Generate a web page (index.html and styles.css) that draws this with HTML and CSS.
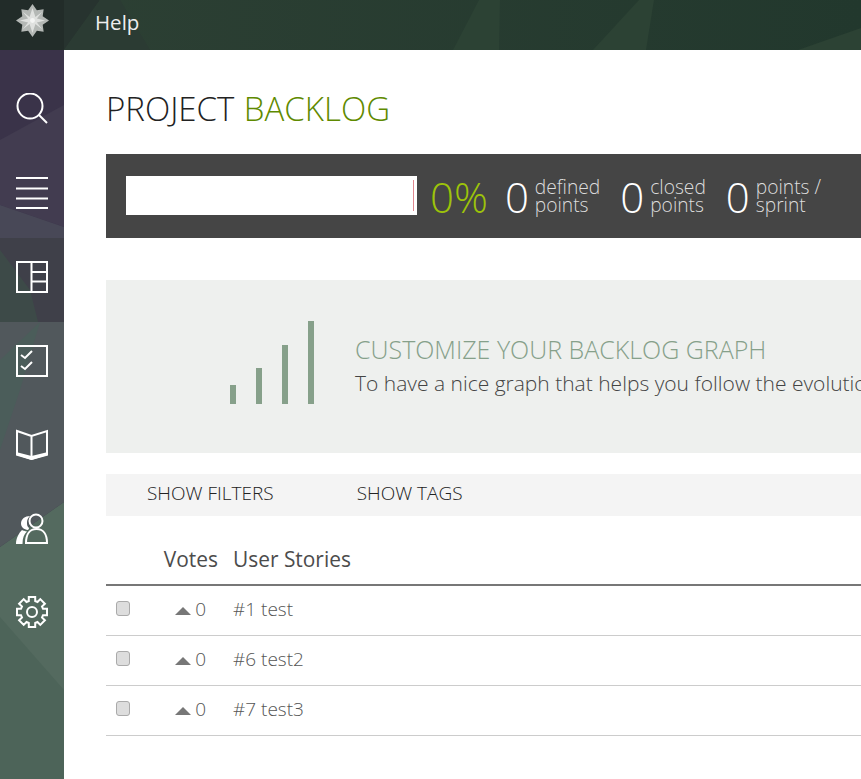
FILE: index.html
```html
<!DOCTYPE html>
<html lang="en">
<head>
  <meta charset="UTF-8" />
  <title>Project Backlog</title>
  <link rel="stylesheet" href="styles.css">
</head>
<body>
  <header class="topbar">
    <svg class="bg-shapes" width="861" height="50" viewBox="0 0 861 50">
      <polygon points="64,0 100,0 64,50" fill="#27332f" />
      <polygon points="100,0 120,0 150,50 64,50" fill="#2b3b33" />
      <polygon points="479,0 500,0 499,50 453,50" fill="#2c4234" />
      <polygon points="639,0 654,0 646,50 593,50" fill="#2c4234" />
      <polygon points="861,28 861,50 798,50" fill="#2c4234" />
    </svg>
    <a class="logo" href="#">
      <svg width="33" height="33" viewBox="0 0 34 34">
        <polygon points="17,0 21.5,6.5 28.5,5.5 27.5,12.5 34,17 27.5,21.5 28.5,28.5 21.5,27.5 17,34 12.5,27.5 5.5,28.5 6.5,21.5 0,17 6.5,12.5 5.5,5.5 12.5,6.5" fill="#b4b8b5" />
        <polygon points="17,4 20,13.5 27,8 21.5,15 30,17 21.5,19 27,26 20,20.5 17,30 14,20.5 7,26 12.5,19 4,17 12.5,15 7,8 14,13.5" fill="#dfe1df" />
        <circle cx="17" cy="17" r="2.5" fill="#f4f5f4" />
      </svg>
    </a>
    <nav class="topnav"><a href="#">Help</a></nav>
  </header>

  <div class="page">
    <aside class="sidebar">
      <svg class="bg-shapes" width="64" height="729" viewBox="0 0 64 729">
        <polygon points="0,90 64,55 64,177 0,155" fill="#423c50" />
        <polygon points="0,155 64,177 64,188 0,188" fill="#484857" />
        <polygon points="0,188 64,188 64,272 0,272" fill="#3f4049" />
        <polygon points="0,272 64,272 64,452 0,497" fill="#51585c" />
        <polygon points="0,497 64,452 64,729 0,729" fill="#546a5f" />
        <polygon points="0,567 64,640 64,729 0,729" fill="#4d6459" />
        <polygon points="40,272 20,340 0,400 0,310" fill="#4b5d5a" />
        <polygon points="0,200 30,240 38,272 0,272" fill="#3d4a48" />
      </svg>
      <a class="side-item" href="#">
        <svg width="32" height="32" viewBox="0 0 32 32"><circle cx="14" cy="13" r="12.5" /><line x1="23" y1="22" x2="31" y2="30" /></svg>
      </a>
      <a class="side-item" href="#">
        <svg width="32" height="32" viewBox="0 0 32 32"><path d="M0 1h32M0 11.500h32M0 21.500h32M0 31h32" /></svg>
      </a>
      <a class="side-item active" href="#">
        <svg width="32" height="32" viewBox="0 0 32 32"><rect x="1" y="1" width="30" height="30" /><path d="M15.500 1v30M15.500 11h15M15.500 20.500h15" /></svg>
      </a>
      <a class="side-item" href="#">
        <svg width="32" height="32" viewBox="0 0 32 32"><rect x="1" y="1" width="30" height="30" /><path d="M5 10l4 3 7-7M5 21l4 3 7-7" /></svg>
      </a>
      <a class="side-item" href="#">
        <svg width="32" height="32" viewBox="0 0 32 32">
          <path d="M15.500 7L1 2v23l14.500 5L31 25V2zM15.500 7v23" />
          <polygon class="solid" points="0,23 15.500,27 32,23 32,26.500 15.500,31 0,26.500" />
        </svg>
      </a>
      <a class="side-item" href="#">
        <svg width="32" height="32" viewBox="0 0 32 32">
          <circle cx="20" cy="8" r="6.500" />
          <path d="M10 30c0-9 4-14 10.500-14S31 21 31 30z" />
          <path class="solid" d="M14 3C9 3 5 6 5 10.500 5 14 8 16.500 12 17c1-1 1-2 1-2-2-1.500-2-3-2-6 0-2 1-4 3-6z" />
          <path class="solid" d="M6 17C3 20 0 25 0 31h6.500c0-6 1.500-10 4.500-12.500C9 18 7 17.500 6 17z" />
        </svg>
      </a>
      <a class="side-item side-gear" href="#">
        <svg width="32" height="32" viewBox="0 0 32 32">
          <circle cx="16" cy="16" r="5" />
          <polygon points="12.800,1 19.200,1 19.200,5 21.500,6 24.300,3.100 28.900,7.700 26,10.500 27,12.800 31,12.800 31,19.200 27,19.200 26,21.500 28.900,24.300 24.300,28.900 21.500,26 19.200,27 19.200,31 12.800,31 12.800,27 10.500,26 7.700,28.900 3.100,24.300 6,21.500 5,19.200 1,19.200 1,12.800 5,12.800 6,10.500 3.100,7.700 7.700,3.100 10.500,6 12.800,5" />
        </svg>
      </a>
    </aside>

    <main class="content">
      <h1 class="title">PROJECT <span>BACKLOG</span></h1>

      <section class="summary">
        <div class="progress"><span class="progress-mark"></span></div>
        <div class="percent">0%</div>
        <div class="stat"><b>0</b><span>defined<br>points</span></div>
        <div class="stat"><b>0</b><span>closed<br>points</span></div>
        <div class="stat"><b>0</b><span>points /<br>sprint</span></div>
      </section>

      <section class="graph-empty">
        <div class="bars">
          <i class="bar-1"></i><i class="bar-2"></i><i class="bar-3"></i><i class="bar-4"></i>
        </div>
        <div class="graph-text">
          <h2>CUSTOMIZE YOUR BACKLOG GRAPH</h2>
          <p>To have a nice graph that helps you follow the evolution of your project you have to set up your points</p>
        </div>
      </section>

      <div class="filters">
        <a href="#">SHOW FILTERS</a>
        <a href="#">SHOW TAGS</a>
      </div>

      <div class="table-head">
        <div class="col-votes">Votes</div>
        <div class="col-story">User Stories</div>
      </div>
      <div class="row">
        <input type="checkbox">
        <div class="col-votes"><i class="arrow"></i>0</div>
        <div class="col-story">#1 test</div>
      </div>
      <div class="row">
        <input type="checkbox">
        <div class="col-votes"><i class="arrow"></i>0</div>
        <div class="col-story">#6 test2</div>
      </div>
      <div class="row">
        <input type="checkbox">
        <div class="col-votes"><i class="arrow"></i>0</div>
        <div class="col-story">#7 test3</div>
      </div>
    </main>
  </div>
</body>
</html>
```

FILE: styles.css
```css
html, body {
  margin: 0;
  height: 100%;
  overflow: hidden;
}
body {
  font-family: 'Open Sans', sans-serif;
  color: #444;
  background: white;
}
a {
  color: inherit;
  text-decoration: none;
}
.bg-shapes {
  position: absolute;
  top: 0;
  left: 0;
}

/* top bar */
.topbar {
  position: relative;
  display: flex;
  height: 50px;
  background: linear-gradient(90deg, #2d4034, #22382d);
}
.logo {
  position: relative;
  width: 64px;
  background: #222c29;
  display: flex;
  justify-content: center;
  padding-top: 4px;
  box-sizing: border-box;
}
.topnav {
  position: relative;
  padding-left: 31px;
  line-height: 45px;
  font-size: 20.5px;
  color: #eee;
}

/* side menu */
.page {
  display: flex;
  height: 729px;
}
.sidebar {
  position: relative;
  flex: 0 0 64px;
  padding-top: 20px;
  box-sizing: border-box;
  background: #3a3349;
  overflow: hidden;
}
.side-item {
  position: relative;
  display: flex;
  justify-content: center;
  height: 84px;
  padding-top: 23px;
  box-sizing: border-box;
}
.side-gear {
  padding-top: 22px;
}
.side-item svg {
  fill: none;
  stroke: #fff;
  stroke-width: 2;
}
.side-item svg .solid {
  fill: #fff;
  stroke: none;
}

/* main */
.content {
  flex: 1;
  min-width: 0;
  padding: 0 0 0 42px;
  overflow: hidden;
}
.title {
  margin: 34px 0 0;
  font-size: 33px;
  word-spacing: 1px;
  line-height: 50px;
  height: 70px;
  font-weight: 300;
  color: #222;
}
.title span {
  color: #5f8a00;
}
.summary {
  display: flex;
  align-items: center;
  width: 860px;
  height: 84px;
  padding-left: 20px;
  box-sizing: border-box;
  background: #454545;
  color: #fff;
}
.progress {
  position: relative;
  width: 291px;
  height: 39px;
  margin-top: -1px;
  background: white;
}
.progress-mark {
  position: absolute;
  top: 4px;
  right: 3px;
  width: 1px;
  height: 31px;
  background: #e08890;
}
.percent {
  margin-left: 13px;
  margin-right: 17px;
  font-size: 42px;
  font-weight: 300;
  color: #9dc30a;
}
.stat {
  display: flex;
  align-items: center;
  margin-right: 20px;
  font-weight: 300;
}
.stat b {
  font-size: 42px;
  font-weight: 300;
  margin-right: 6px;
}
.stat span {
  font-size: 19.200px;
  line-height: 18px;
  color: #ddd;
}
.graph-empty {
  display: flex;
  align-items: flex-start;
  width: 860px;
  height: 173px;
  margin-top: 42px;
  background: #eef0ee;
  white-space: nowrap;
}
.bars {
  display: flex;
  align-items: flex-end;
  gap: 20px;
  height: 83px;
  margin: 41px 0 0 124px;
}
.bars i {
  width: 6px;
  background: #86a08a;
}
.bar-1 { height: 19px; }
.bar-2 { height: 36px; }
.bar-3 { height: 59px; }
.bar-4 { height: 83px; }
.graph-text {
  margin: 53px 0 0 41px;
}
.graph-text h2 {
  margin: 0;
  font-size: 25px;
  line-height: 33px;
  font-weight: 300;
  color: #86a08a;
}
.graph-text p {
  margin: 0;
  font-size: 21px;
  line-height: 35px;
  font-weight: 300;
  color: #444;
}
.filters {
  display: flex;
  gap: 83px;
  width: 860px;
  height: 42px;
  margin-top: 21px;
  padding-left: 41px;
  box-sizing: border-box;
  background: #f4f4f4;
  font-size: 19px;
  font-weight: 300;
  line-height: 38px;
  color: #222;
}
.table-head {
  display: flex;
  width: 860px;
  height: 70px;
  padding-top: 29px;
  box-sizing: border-box;
  border-bottom: 2px solid #777;
  font-size: 20.900px;
  line-height: 28px;
  color: #4c4c4c;
}
.col-votes {
  box-sizing: border-box;
  text-align: right;
}
.table-head .col-votes {
  width: 127px;
  padding-right: 15px;
}
.row {
  display: flex;
  align-items: center;
  width: 860px;
  height: 50px;
  padding-bottom: 3px;
  box-sizing: border-box;
  border-bottom: 1px solid #ccc;
  font-size: 19px;
  font-weight: 300;
  color: #555;
}
.row input {
  appearance: none;
  width: 14px;
  height: 15px;
  margin: 0 0 2px 10px;
  border: 1px solid #aaa;
  border-radius: 3px;
  background: #ddd;
}
.row .col-votes {
  width: 103px;
  padding-right: 27px;
}
.arrow {
  display: inline-block;
  width: 0;
  height: 0;
  margin-right: 4px;
  vertical-align: 1px;
  border-left: 8px solid transparent;
  border-right: 8px solid transparent;
  border-bottom: 8px solid #777;
}
```
